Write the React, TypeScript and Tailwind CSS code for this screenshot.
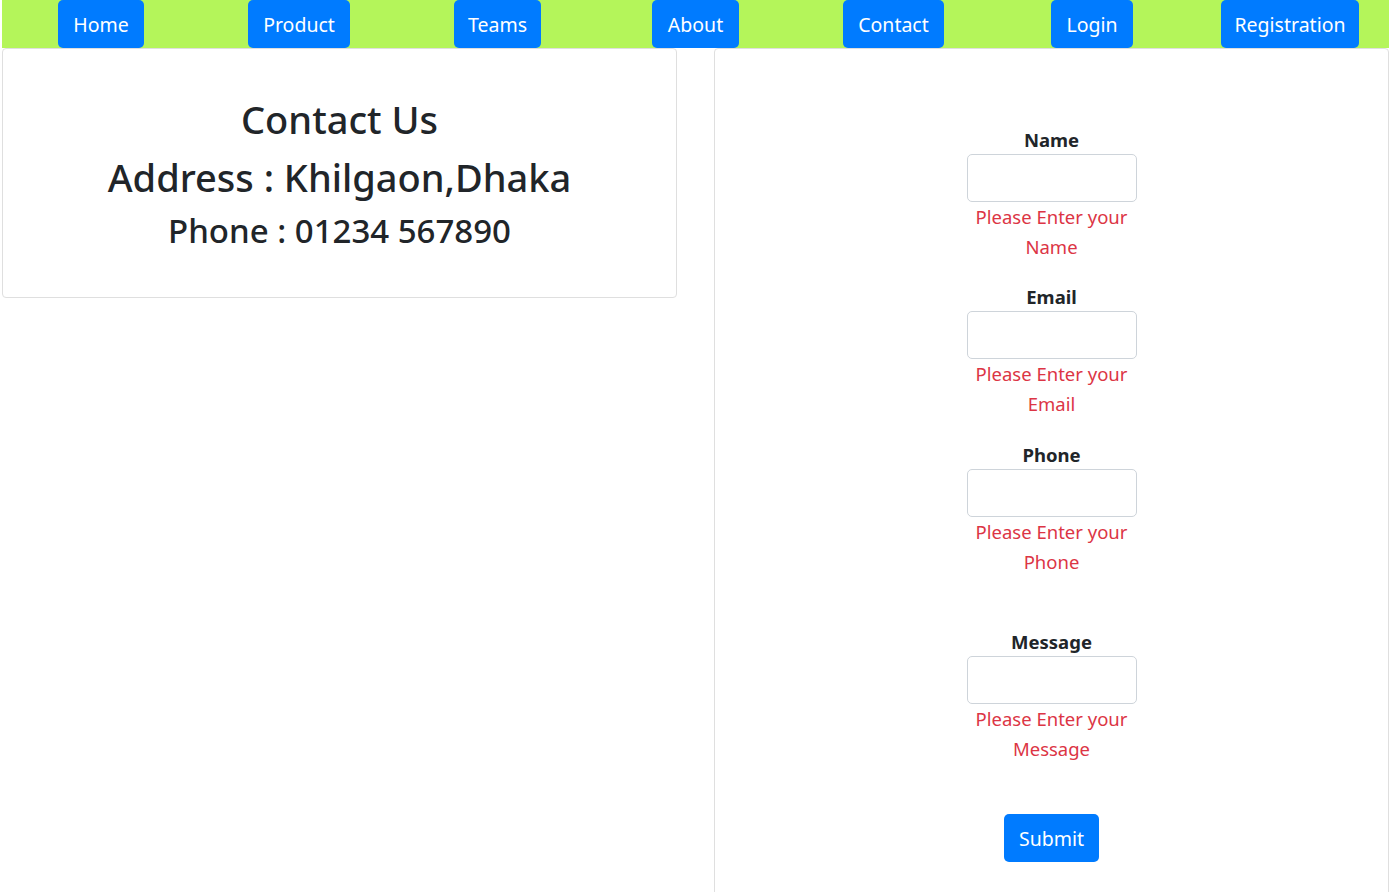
import React from "react";

const navItems: { label: string; ml: string; w: string }[] = [
  { label: "Home", ml: "ml-[56px]", w: "w-[86px]" },
  { label: "Product", ml: "ml-[104px]", w: "w-[102px]" },
  { label: "Teams", ml: "ml-[104px]", w: "w-[87px]" },
  { label: "About", ml: "ml-[111px]", w: "w-[87px]" },
  { label: "Contact", ml: "ml-[104px]", w: "w-[101px]" },
  { label: "Login", ml: "ml-[107px]", w: "w-[82px]" },
  { label: "Registration", ml: "ml-[88px]", w: "w-[138px]" },
];

function Field({ label, mb }: { label: string; mb: string }) {
  return (
    <div className={`flex flex-col items-center ${mb}`}>
      <label className="h-[29px] text-[18.5px] leading-[29px] font-bold text-[#212529]">{label}</label>
      <input
        type="text"
        className="h-[48px] w-[170px] rounded-[5px] border border-[#ced4da] bg-white outline-none"
      />
      <p className="w-[170px] text-center text-[18.5px] leading-[30px] text-[#dc3545]">
        Please Enter your {label}
      </p>
    </div>
  );
}

export default function App() {
  return (
    <div className="h-screen overflow-hidden bg-white px-[2px] font-['Noto_Sans',sans-serif] text-[#212529]">
      <nav className="flex h-[48px] items-stretch bg-[#b4f55a]">
        {navItems.map((n) => (
          <button
            key={n.label}
            className={`${n.ml} ${n.w} flex h-[48px] items-center justify-center rounded-[5px] bg-[#007bff] pt-[2px] text-[19.5px] text-white`}
          >
            {n.label}
          </button>
        ))}
      </nav>
      <div className="flex items-start gap-[37px]">
        <div className="w-[675px] rounded-[4px] border border-[#dfdfdf] pt-[46px] pb-[46px] text-center">
          <h1 className="h-[48px] text-[38px] leading-[48px] font-medium">Contact Us</h1>
          <h1 className="mt-[10px] h-[48px] text-[38px] leading-[48px] font-medium">Address : Khilgaon,Dhaka</h1>
          <h2 className="mt-[10px] h-[40px] text-[33px] leading-[40px] font-medium">Phone : 01234 567890</h2>
        </div>
        <div className="h-[900px] w-[675px] rounded-[4px] border border-[#dfdfdf] pt-[76px]">
          <form className="flex flex-col items-center">
            <Field label="Name" mb="mb-[20px]" />
            <Field label="Email" mb="mb-[21px]" />
            <Field label="Phone" mb="mb-[50px]" />
            <Field label="Message" mb="mb-[50px]" />
            <button
              type="button"
              className="flex h-[48px] w-[95px] items-center justify-center rounded-[5px] bg-[#007bff] pt-[2px] text-[19.5px] text-white"
            >
              Submit
            </button>
          </form>
        </div>
      </div>
    </div>
  );
}
